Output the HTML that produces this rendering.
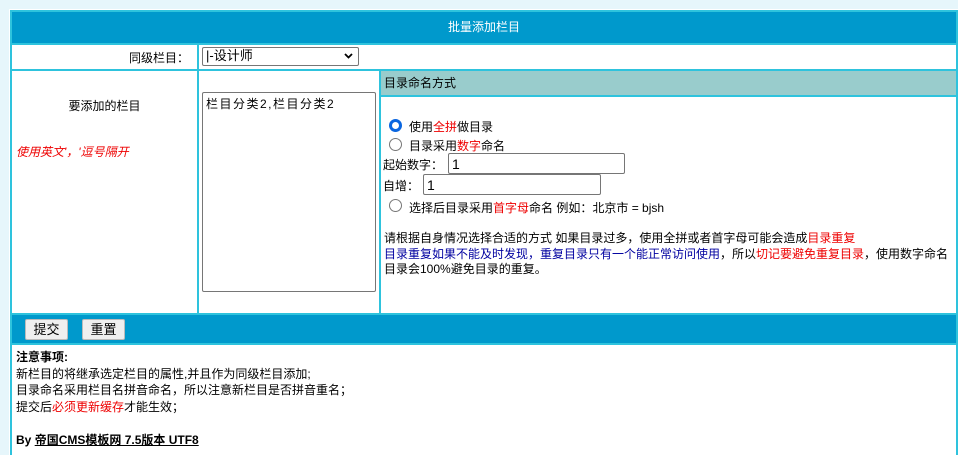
<!DOCTYPE html>
<html><head><meta charset="utf-8"><style>
body{margin:0;width:964px;height:455px;background:#fff;font:12px "Liberation Sans","Noto Sans CJK SC",sans-serif;color:#000;position:relative;overflow:hidden}
.a{position:absolute}
.bd{background:#2ec3dd}
.red{color:#e00}
.blue{color:#0000a0}
input[type=text]{font:14px "Liberation Sans",sans-serif;border:1px solid #767676;border-radius:2px;padding:0 3px;box-sizing:border-box;height:21px}
.rad{position:absolute;width:11px;height:11px;border:1px solid #777;border-radius:50%;background:#fff}
.btn{position:absolute;height:21px;border:1px solid #bbb;border-radius:2px;background:#efefef;font-size:13px;text-align:center;line-height:20px;box-sizing:border-box}
</style></head><body>
<div class="a" style="left:0;top:0;width:964px;height:9px;background:#e6f6fb"></div>
<div class="a" style="left:0;top:0;width:9px;height:455px;background:#e6f6fb"></div>
<div class="a" style="left:958px;top:0;width:6px;height:455px;background:#fff"></div>
<div class="a bd" style="left:10px;top:10px;width:948px;height:445px"></div>
<div class="a" style="left:12px;top:12px;width:944px;height:31px;background:#0099cc;color:#fff;text-align:center;line-height:31px">批量添加栏目</div>
<div class="a" style="left:12px;top:45px;width:185px;height:24px;background:#fff"></div>
<div class="a" style="left:12px;top:49px;width:177px;text-align:right">同级栏目：</div>
<div class="a" style="left:199px;top:45px;width:757px;height:24px;background:#fff"></div>
<div class="a" style="left:202px;top:47px;width:157px;height:19px;border:1px solid #767676;border-radius:2px;box-sizing:border-box;font-size:13px;line-height:16px;padding-left:3px">|-设计师<svg style="position:absolute;right:5px;top:5px" width="9" height="6" viewBox="0 0 9 6"><path d="M1 1L4.5 4.5L8 1" stroke="#000" stroke-width="1.8" fill="none"/></svg></div>
<div class="a" style="left:12px;top:71px;width:185px;height:242px;background:#fff"></div>
<div class="a" style="left:12px;top:97px;width:185px;text-align:center">要添加的栏目</div>
<div class="a red" style="left:16px;top:143px;font-style:italic">使用英文'，'逗号隔开</div>
<div class="a" style="left:199px;top:71px;width:180px;height:242px;background:#fff"></div>
<div class="a" style="left:202px;top:92px;width:174px;height:200px;border:1px solid #767676;border-radius:2px;box-sizing:border-box;padding:2px 3px;font-size:12px;letter-spacing:1.5px">栏目分类2,栏目分类2</div>
<div class="a" style="left:381px;top:71px;width:575px;height:24px;background:#99cccc;line-height:24px;text-indent:3px">目录命名方式</div>
<div class="a" style="left:381px;top:97px;width:575px;height:216px;background:#fff"></div>
<div class="rad" style="left:389px;top:119px;border:3px solid #0a66e0;width:7px;height:7px"></div>
<div class="a" style="left:409px;top:118px">使用<span class="red">全拼</span>做目录</div>
<div class="rad" style="left:389px;top:138px"></div>
<div class="a" style="left:409px;top:137px">目录采用<span class="red">数字</span>命名</div>
<div class="a" style="left:383px;top:156px">起始数字：</div>
<input type="text" value="1" class="a" style="left:448px;top:153px;width:177px">
<div class="a" style="left:383px;top:177px">自增：</div>
<input type="text" value="1" class="a" style="left:423px;top:174px;width:178px">
<div class="rad" style="left:389px;top:199px"></div>
<div class="a" style="left:409px;top:199px">选择后目录采用<span class="red">首字母</span>命名 例如：北京市 = bjsh</div>
<div class="a" style="left:384px;top:231px;line-height:15.5px;width:570px">请根据自身情况选择合适的方式 如果目录过多，使用全拼或者首字母可能会造成<span class="red">目录重复</span><br><span class="blue">目录重复如果不能及时发现，重复目录只有一个能正常访问使用</span>，所以<span class="red">切记要避免重复目录</span>，使用数字命名<br>目录会100%避免目录的重复。</div>
<div class="a" style="left:12px;top:315px;width:944px;height:28px;background:#0099cc"></div>
<div class="btn" style="left:25px;top:319px;width:43px">提交</div>
<div class="btn" style="left:82px;top:319px;width:43px">重置</div>
<div class="a" style="left:12px;top:345px;width:944px;height:110px;background:#fff"></div>
<div class="a" style="left:16px;top:349px;line-height:16.5px"><b>注意事项:</b><br>新栏目的将继承选定栏目的属性,并且作为同级栏目添加;<br>目录命名采用栏目名拼音命名，所以注意新栏目是否拼音重名；<br>提交后<span class="red">必须更新缓存</span>才能生效；<br><br><b>By <u>帝国CMS模板网 7.5版本 UTF8</u></b></div>
</body></html>
